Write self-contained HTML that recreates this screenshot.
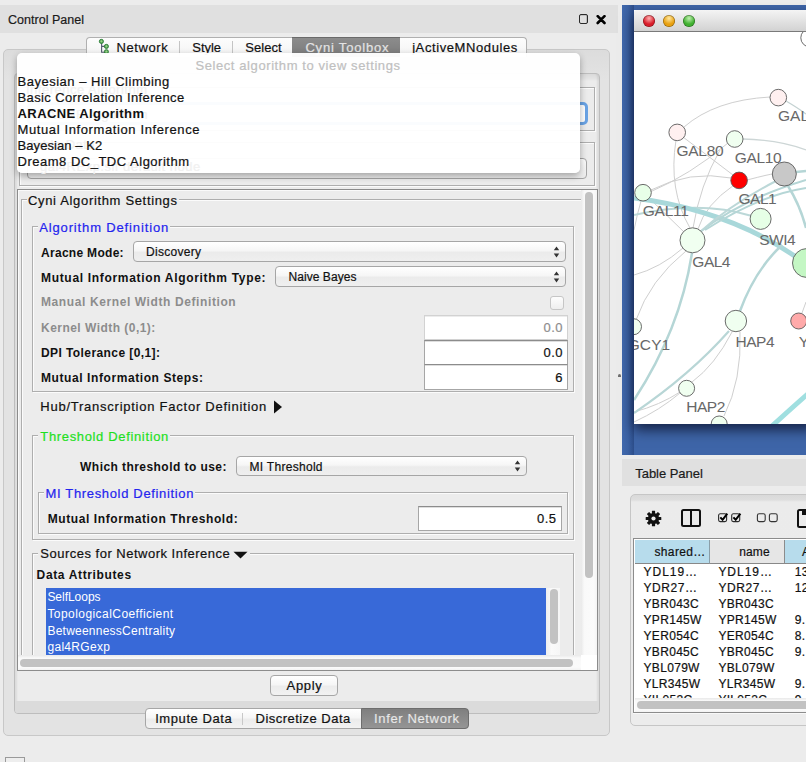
<!DOCTYPE html><html><head><meta charset="utf-8"><style>
html,body{margin:0;padding:0;}
body{width:806px;height:762px;overflow:hidden;position:relative;background:#ececec;font-family:"Liberation Sans",sans-serif;}
.t{position:absolute;white-space:nowrap;line-height:1;-webkit-text-stroke:0.2px currentColor;}
</style></head><body>
<div style="position:absolute;left:0px;top:5px;width:618px;height:28px;box-sizing:border-box;background:#e0e0e0;"></div>
<div class="t" style="left:8.00px;top:13.92px;font-size:12.5px;color:#1b1b1b;letter-spacing:0.021px;">Control Panel</div>
<div style="position:absolute;left:579.2px;top:14.2px;width:9.3px;height:9.4px;box-sizing:border-box;border:1.3px solid #2a2a2a;border-radius:2px;box-shadow:inset -0.6px 0.6px 0 rgba(0,0,0,0.25);"></div>
<svg style="position:absolute;left:596px;top:15px" width="10" height="10" viewBox="0 0 10 10"><path d="M1.7 1.2L8.5 8M8.5 1.2L1.7 8" stroke="#000" stroke-width="2.6" stroke-linecap="round"/></svg>
<div style="position:absolute;left:3px;top:49px;width:607px;height:687px;box-sizing:border-box;background:linear-gradient(#dcdcdc,#e3e3e3 30px,#e3e3e3);border:1px solid #c8c8c8;border-radius:5px;"></div>
<div style="position:absolute;left:86px;top:37px;width:441px;height:20px;box-sizing:border-box;border:1px solid #b0b0b0;border-bottom:none;border-radius:4px 4px 0 0;background:linear-gradient(#fdfdfd,#f3f3f3);"></div>
<div style="position:absolute;left:292px;top:37px;width:108px;height:20px;box-sizing:border-box;background:linear-gradient(#8c8c8c,#7a7a7a);border-top:1px solid #6a6a6a;"></div>
<div style="position:absolute;left:179px;top:41px;width:1px;height:14px;box-sizing:border-box;background:#c4c4c4;"></div>
<div style="position:absolute;left:232px;top:41px;width:1px;height:14px;box-sizing:border-box;background:#c4c4c4;"></div>
<div class="t" style="left:116.50px;top:41.40px;font-size:13px;color:#111;letter-spacing:0.575px;">Network</div>
<div class="t" style="left:192.30px;top:41.40px;font-size:13px;color:#111;letter-spacing:-0.025px;">Style</div>
<div class="t" style="left:245.30px;top:41.40px;font-size:13px;color:#111;letter-spacing:0.030px;">Select</div>
<div class="t" style="left:305.40px;top:41.40px;font-size:13px;color:#e4e4e4;letter-spacing:0.818px;">Cyni Toolbox</div>
<div class="t" style="left:412.15px;top:41.40px;font-size:13px;color:#111;letter-spacing:0.596px;">jActiveMNodules</div>
<svg style="position:absolute;left:97px;top:37px" width="14" height="18" viewBox="0 0 14 18"><path d="M4.6 6V15.3H9M4.6 9.4H9" stroke="#555a70" stroke-width="1.1" fill="none"/><defs><radialGradient id="gg" cx="50%" cy="45%" r="55%"><stop offset="0" stop-color="#a6d890"/><stop offset="1" stop-color="#3d9a45"/></radialGradient></defs><circle cx="4.4" cy="4.4" r="2.05" fill="url(#gg)" stroke="#2b7d37" stroke-width="0.9"/><circle cx="9.4" cy="9.4" r="2.05" fill="url(#gg)" stroke="#2b7d37" stroke-width="0.9"/><circle cx="9.4" cy="14.7" r="2.05" fill="url(#gg)" stroke="#2b7d37" stroke-width="0.9"/></svg>
<div style="position:absolute;left:14px;top:73px;width:586px;height:641px;box-sizing:border-box;background:linear-gradient(#dadada,#e4e4e4 5px,#ececec 7px,#ececec);border:1px solid #bdbdbd;border-radius:4px;box-shadow:inset 3px 0 2px -1px rgba(0,0,0,0.07),inset -3px 0 2px -1px rgba(0,0,0,0.07);"></div>
<div style="position:absolute;left:15px;top:701px;width:584px;height:12px;box-sizing:border-box;background:#dbdbdb;border-radius:0 0 3px 3px;"></div>
<div style="position:absolute;left:20px;top:88px;width:576px;height:44px;box-sizing:border-box;border:1px solid #fbfbfb;"></div>
<div style="position:absolute;left:19px;top:87px;width:576px;height:44px;box-sizing:border-box;border:1px solid #aeaeae;"></div>
<div style="position:absolute;left:27px;top:102px;width:561px;height:23px;box-sizing:border-box;border:3px solid #6aa3e4;border-radius:5px;background:#fff;"></div>
<div style="position:absolute;left:20px;top:143px;width:576px;height:44px;box-sizing:border-box;border:1px solid #fbfbfb;"></div>
<div style="position:absolute;left:19px;top:142px;width:576px;height:44px;box-sizing:border-box;border:1px solid #aeaeae;"></div>
<div style="position:absolute;left:27px;top:158px;width:560px;height:21px;box-sizing:border-box;border:1px solid #a5a5a5;border-radius:4px;background:linear-gradient(#fdfdfd,#ececec);"></div>
<div style="position:absolute;left:17px;top:189px;width:581px;height:482px;box-sizing:border-box;border:1px solid #8c8c8c;background:#ececec;"></div>
<div style="position:absolute;left:18px;top:190px;width:579px;height:480px;box-sizing:border-box;border-top:1px solid #fafafa;border-left:1px solid #fafafa;"></div>
<div style="position:absolute;left:22px;top:200px;width:570px;height:462px;box-sizing:border-box;border:1px solid #fbfbfb;"></div>
<div style="position:absolute;left:21px;top:199px;width:570px;height:462px;box-sizing:border-box;border:1px solid #aeaeae;"></div>
<div style="position:absolute;left:27px;top:199px;width:152px;height:2px;box-sizing:border-box;background:#ececec;"></div>
<div class="t" style="left:28.00px;top:194.40px;font-size:13px;color:#111;letter-spacing:0.664px;">Cyni Algorithm Settings</div>
<div style="position:absolute;left:33px;top:227px;width:542px;height:166px;box-sizing:border-box;border:1px solid #fbfbfb;"></div>
<div style="position:absolute;left:32px;top:226px;width:542px;height:166px;box-sizing:border-box;border:1px solid #aeaeae;"></div>
<div style="position:absolute;left:37.5px;top:226px;width:132.5px;height:2px;box-sizing:border-box;background:#ececec;"></div>
<div class="t" style="left:39.20px;top:221.20px;font-size:13px;color:#2424ee;letter-spacing:0.858px;">Algorithm Definition</div>
<div class="t" style="left:41.00px;top:246.54px;font-size:12px;color:#111;font-weight:bold;-webkit-text-stroke:0;letter-spacing:0.295px;">Aracne Mode:</div>
<div style="position:absolute;left:133px;top:241px;width:433px;height:21px;box-sizing:border-box;border:1px solid #a6a6a6;border-radius:4px;background:linear-gradient(#ffffff,#f6f6f6 45%,#ebebeb 55%,#efefef);"></div>
<svg style="position:absolute;left:552px;top:244.5px" width="8" height="14" viewBox="0 0 8 14"><path d="M4.5 1.4L7.2 5.3H1.8Z M4.5 12.6L7.2 8.6H1.8Z" fill="#333"/></svg>
<div class="t" style="left:146.00px;top:246.34px;font-size:12px;color:#111;letter-spacing:0.287px;">Discovery</div>
<div class="t" style="left:41.00px;top:271.54px;font-size:12px;color:#111;font-weight:bold;-webkit-text-stroke:0;letter-spacing:0.682px;">Mutual Information Algorithm Type:</div>
<div style="position:absolute;left:275px;top:266px;width:291px;height:21px;box-sizing:border-box;border:1px solid #a6a6a6;border-radius:4px;background:linear-gradient(#ffffff,#f6f6f6 45%,#ebebeb 55%,#efefef);"></div>
<svg style="position:absolute;left:552px;top:269.5px" width="8" height="14" viewBox="0 0 8 14"><path d="M4.5 1.4L7.2 5.3H1.8Z M4.5 12.6L7.2 8.6H1.8Z" fill="#333"/></svg>
<div class="t" style="left:288.50px;top:271.34px;font-size:12px;color:#111;letter-spacing:0.055px;">Naive Bayes</div>
<div class="t" style="left:41.00px;top:296.34px;font-size:12px;color:#8c8c8c;font-weight:bold;-webkit-text-stroke:0;letter-spacing:0.602px;">Manual Kernel Width Definition</div>
<div style="position:absolute;left:550px;top:296px;width:14px;height:14px;box-sizing:border-box;border:1px solid #c6c6c6;border-radius:3px;background:linear-gradient(#fdfdfd,#eeeeee);"></div>
<div class="t" style="left:41.00px;top:321.54px;font-size:12px;color:#8c8c8c;font-weight:bold;-webkit-text-stroke:0;letter-spacing:0.467px;">Kernel Width (0,1):</div>
<div style="position:absolute;left:424px;top:315px;width:144px;height:25px;box-sizing:border-box;border:1px solid #d2d2d2;box-shadow:inset 0 1px 0 #ececec;background:#fff;"></div>
<div class="t" style="left:543.45px;top:321.10px;font-size:13px;color:#8e8e8e;letter-spacing:0.500px;">0.0</div>
<div class="t" style="left:41.00px;top:346.84px;font-size:12px;color:#111;font-weight:bold;-webkit-text-stroke:0;letter-spacing:0.413px;">DPI Tolerance [0,1]:</div>
<div style="position:absolute;left:424px;top:340px;width:144px;height:25px;box-sizing:border-box;border:1px solid #a6a6a6;border-top-color:#8c8c8c;box-shadow:inset 0 1px 0 #dedede;background:#fff;"></div>
<div class="t" style="left:543.45px;top:345.90px;font-size:13px;color:#111;letter-spacing:0.500px;">0.0</div>
<div class="t" style="left:41.00px;top:371.84px;font-size:12px;color:#111;font-weight:bold;-webkit-text-stroke:0;letter-spacing:0.583px;">Mutual Information Steps:</div>
<div style="position:absolute;left:424px;top:364px;width:144px;height:26px;box-sizing:border-box;border:1px solid #a6a6a6;border-top-color:#8c8c8c;box-shadow:inset 0 1px 0 #dedede;background:#fff;"></div>
<div class="t" style="left:555.25px;top:370.70px;font-size:13px;color:#111;">6</div>
<div class="t" style="left:40.30px;top:400.10px;font-size:13px;color:#111;letter-spacing:0.754px;">Hub/Transcription Factor Definition</div>
<svg style="position:absolute;left:273px;top:400px" width="10" height="14" viewBox="0 0 10 14"><path d="M1 0.5L9 7L1 13.5Z" fill="#111"/></svg>
<div style="position:absolute;left:33px;top:436px;width:542px;height:105px;box-sizing:border-box;border:1px solid #fbfbfb;"></div>
<div style="position:absolute;left:32px;top:435px;width:542px;height:105px;box-sizing:border-box;border:1px solid #aeaeae;"></div>
<div style="position:absolute;left:37.5px;top:435px;width:132.5px;height:2px;box-sizing:border-box;background:#ececec;"></div>
<div class="t" style="left:40.30px;top:430.10px;font-size:13px;color:#1ee01e;letter-spacing:0.653px;">Threshold Definition</div>
<div class="t" style="left:80.10px;top:460.74px;font-size:12px;color:#111;font-weight:bold;-webkit-text-stroke:0;letter-spacing:0.439px;">Which threshold to use:</div>
<div style="position:absolute;left:236px;top:456px;width:291px;height:20px;box-sizing:border-box;border:1px solid #a6a6a6;border-radius:4px;background:linear-gradient(#ffffff,#f6f6f6 45%,#ebebeb 55%,#efefef);"></div>
<svg style="position:absolute;left:513px;top:459.0px" width="8" height="14" viewBox="0 0 8 14"><path d="M4.5 1.4L7.2 5.3H1.8Z M4.5 12.6L7.2 8.6H1.8Z" fill="#333"/></svg>
<div class="t" style="left:249.50px;top:460.54px;font-size:12px;color:#111;letter-spacing:0.291px;">MI Threshold</div>
<div style="position:absolute;left:39px;top:493px;width:530px;height:42px;box-sizing:border-box;border:1px solid #fbfbfb;"></div>
<div style="position:absolute;left:38px;top:492px;width:530px;height:42px;box-sizing:border-box;border:1px solid #aeaeae;"></div>
<div style="position:absolute;left:43.5px;top:492px;width:151.5px;height:2px;box-sizing:border-box;background:#ececec;"></div>
<div class="t" style="left:45.50px;top:486.70px;font-size:13px;color:#2424ee;letter-spacing:0.661px;">MI Threshold Definition</div>
<div class="t" style="left:47.70px;top:512.84px;font-size:12px;color:#111;font-weight:bold;-webkit-text-stroke:0;letter-spacing:0.595px;">Mutual Information Threshold:</div>
<div style="position:absolute;left:418px;top:506px;width:144px;height:25px;box-sizing:border-box;border:1px solid #a6a6a6;border-top-color:#8c8c8c;box-shadow:inset 0 1px 0 #dedede;background:#fff;"></div>
<div class="t" style="left:536.95px;top:511.70px;font-size:13px;color:#111;letter-spacing:0.500px;">0.5</div>
<div style="position:absolute;left:33px;top:554px;width:542px;height:106px;box-sizing:border-box;border:1px solid #fbfbfb;"></div>
<div style="position:absolute;left:32px;top:553px;width:542px;height:106px;box-sizing:border-box;border:1px solid #aeaeae;"></div>
<div style="position:absolute;left:37.5px;top:553px;width:212.5px;height:2px;box-sizing:border-box;background:#ececec;"></div>
<div class="t" style="left:40.30px;top:547.00px;font-size:13px;color:#111;letter-spacing:0.495px;">Sources for Network Inference</div>
<svg style="position:absolute;left:233px;top:551px" width="15" height="8" viewBox="0 0 15 8"><path d="M0.5 0.8H14.5L7.5 7.6Z" fill="#111"/></svg>
<div class="t" style="left:36.60px;top:569.34px;font-size:12px;color:#111;font-weight:bold;-webkit-text-stroke:0;letter-spacing:0.639px;">Data Attributes</div>
<div style="position:absolute;left:46px;top:588px;width:500px;height:67px;box-sizing:border-box;background:#3869d8;"></div>
<div style="position:absolute;left:546px;top:588px;width:14px;height:67px;box-sizing:border-box;background:linear-gradient(90deg,#eeeeee,#fafafa 40%,#f6f6f6);"></div>
<div style="position:absolute;left:550px;top:589px;width:8px;height:55px;box-sizing:border-box;background:#c2c2c2;border-radius:4px;"></div>
<div class="t" style="left:47.40px;top:591.04px;font-size:12px;color:#fff;letter-spacing:-0.025px;-webkit-text-stroke:0;">SelfLoops</div>
<div class="t" style="left:47.40px;top:607.84px;font-size:12px;color:#fff;letter-spacing:0.440px;-webkit-text-stroke:0;">TopologicalCoefficient</div>
<div class="t" style="left:47.40px;top:624.64px;font-size:12px;color:#fff;letter-spacing:0.242px;-webkit-text-stroke:0;">BetweennessCentrality</div>
<div class="t" style="left:47.40px;top:641.44px;font-size:12px;color:#fff;letter-spacing:0.319px;-webkit-text-stroke:0;">gal4RGexp</div>
<div style="position:absolute;left:581px;top:190px;width:16px;height:465px;box-sizing:border-box;background:linear-gradient(90deg,#e9e9e9,#f9f9f9 20%,#fbfbfb 80%,#f3f3f3);"></div>
<div style="position:absolute;left:585px;top:192px;width:8px;height:386px;box-sizing:border-box;background:#c2c2c2;border-radius:4px;"></div>
<div style="position:absolute;left:18px;top:655px;width:563px;height:15px;box-sizing:border-box;background:linear-gradient(#e9e9e9,#f9f9f9 20%,#fbfbfb 80%,#f3f3f3);"></div>
<div style="position:absolute;left:20px;top:659px;width:553px;height:8px;box-sizing:border-box;background:#c2c2c2;border-radius:4px;"></div>
<div style="position:absolute;left:581px;top:655px;width:16px;height:15px;box-sizing:border-box;background:#fff;"></div>
<div style="position:absolute;left:270px;top:675px;width:68px;height:21px;box-sizing:border-box;border:1px solid #a6a6a6;border-radius:4px;background:linear-gradient(#ffffff,#f6f6f6 45%,#ececec 55%,#f2f2f2);"></div>
<div class="t" style="left:286.60px;top:678.70px;font-size:13px;color:#111;letter-spacing:0.650px;">Apply</div>
<div style="position:absolute;left:145px;top:708px;width:324px;height:21px;box-sizing:border-box;border:1px solid #a6a6a6;border-radius:4px;background:linear-gradient(#ffffff,#f6f6f6 45%,#ececec 55%,#f2f2f2);"></div>
<div style="position:absolute;left:361px;top:708px;width:108px;height:21px;box-sizing:border-box;background:linear-gradient(#7f7f7f,#959595);border-radius:0 4px 4px 0;border:1px solid #6e6e6e;"></div>
<div style="position:absolute;left:242px;top:713px;width:1px;height:12px;box-sizing:border-box;background:#c8c8c8;"></div>
<div class="t" style="left:155.20px;top:712.20px;font-size:13px;color:#111;letter-spacing:0.575px;">Impute Data</div>
<div class="t" style="left:255.60px;top:712.20px;font-size:13px;color:#111;letter-spacing:0.461px;">Discretize Data</div>
<div class="t" style="left:374.10px;top:712.10px;font-size:13px;color:#ececec;letter-spacing:0.629px;text-shadow:0 -0.5px 0 rgba(0,0,0,0.35);">Infer Network</div>
<div style="position:absolute;left:17px;top:53px;width:563px;height:120px;background:rgba(255,255,255,0.965);border-radius:5px;box-shadow:0 3px 7px rgba(0,0,0,0.32);"></div>
<div class="t" style="left:26.00px;top:83.00px;font-size:13px;color:#f1f1f1;letter-spacing:0.500px;">Inference Algorithm</div>
<div class="t" style="left:28.00px;top:107.50px;font-size:13px;color:#f1f1f1;letter-spacing:0.500px;">ARACNE Algorithm</div>
<div class="t" style="left:28.00px;top:137.50px;font-size:13px;color:#f1f1f1;letter-spacing:0.500px;">Table Data</div>
<div class="t" style="left:40.00px;top:159.50px;font-size:13px;color:#f1f1f1;letter-spacing:0.500px;">gal4RExp.sif default node</div>
<div class="t" style="left:195.40px;top:59.00px;font-size:13px;color:#c0c0c0;letter-spacing:0.591px;">Select algorithm to view settings</div>
<div class="t" style="left:17.50px;top:74.70px;font-size:13px;color:#111;letter-spacing:0.507px;">Bayesian – Hill Climbing</div>
<div class="t" style="left:17.50px;top:90.70px;font-size:13px;color:#111;letter-spacing:0.381px;">Basic Correlation Inference</div>
<div class="t" style="left:17.50px;top:106.70px;font-size:13px;color:#111;font-weight:bold;-webkit-text-stroke:0;letter-spacing:0.427px;">ARACNE Algorithm</div>
<div class="t" style="left:17.50px;top:122.70px;font-size:13px;color:#111;letter-spacing:0.613px;">Mutual Information Inference</div>
<div class="t" style="left:17.50px;top:138.70px;font-size:13px;color:#111;letter-spacing:0.079px;">Bayesian – K2</div>
<div class="t" style="left:17.50px;top:154.70px;font-size:13px;color:#111;letter-spacing:0.507px;">Dream8 DC_TDC Algorithm</div>
<div style="position:absolute;left:618px;top:374px;width:3px;height:2.6px;box-sizing:border-box;background:#5a5a5a;border-radius:1.5px 1.5px 0 0;opacity:0.85;"></div>
<div style="position:absolute;left:5px;top:757px;width:20px;height:10px;box-sizing:border-box;border:1px solid #9a9a9a;background:#eee;"></div>
<div style="position:absolute;left:622px;top:5px;width:200px;height:450px;box-sizing:border-box;background:linear-gradient(90deg,#4068ad,#3b61a3 6px,#2c4d8a 12px,#3e65a8 12px,#3e65a8);"></div>
<div style="position:absolute;left:634px;top:10px;width:180px;height:414px;box-sizing:border-box;background:#fff;box-shadow:0 6px 12px rgba(0,0,20,0.65);"></div>
<svg style="position:absolute;left:634px;top:31px" width="172" height="393" viewBox="634 31 172 393"><path d="M684 127 Q715 100 770 97" stroke="#cfcfcf" stroke-width="1" fill="none"/><path d="M786 101 Q798 108 806 114" stroke="#c4d2d2" stroke-width="1.3" fill="none"/><path d="M676 140 Q668 190 690 228" stroke="#cfcfcf" stroke-width="1" fill="none"/><path d="M683 137 L733 175" stroke="#cfcfcf" stroke-width="1" fill="none"/><path d="M728 143 Q690 175 650 192" stroke="#cfcfcf" stroke-width="1" fill="none"/><path d="M651 190 Q690 170 731 178" stroke="#cfcfcf" stroke-width="1" fill="none"/><path d="M720 150 Q700 185 693 228" stroke="#cfcfcf" stroke-width="1" fill="none"/><path d="M734 185 Q705 205 698 229" stroke="#cfcfcf" stroke-width="1" fill="none"/><path d="M649 198 L684 232" stroke="#cfcfcf" stroke-width="1" fill="none"/><path d="M641 201 Q637 215 634 230" stroke="#cfcfcf" stroke-width="1" fill="none"/><path d="M747 180 Q770 174 773 174" stroke="#cfcfcf" stroke-width="1" fill="none"/><path d="M683 248 Q660 268 634 275" stroke="#cfcfcf" stroke-width="1" fill="none"/><path d="M686 251 Q650 280 636 320" stroke="#cfcfcf" stroke-width="1" fill="none"/><path d="M732 332 Q715 365 692 382" stroke="#cfcfcf" stroke-width="1" fill="none"/><path d="M680 392 Q660 405 634 412" stroke="#cfcfcf" stroke-width="1" fill="none"/><path d="M740 332 Q742 380 724 416" stroke="#cfcfcf" stroke-width="1" fill="none"/><path d="M802 313 L806 302" stroke="#cfcfcf" stroke-width="1" fill="none"/><path d="M743 139 Q780 140 806 150" stroke="#cdd6d6" stroke-width="1.3" fill="none"/><path d="M634 215 Q700 200 752 216" stroke="#bcd8d8" stroke-width="2" fill="none"/><path d="M634 198 Q735 211 806 264" stroke="#a8d8da" stroke-width="5" fill="none"/><path d="M700 232 Q740 200 806 180" stroke="#b5d6d6" stroke-width="2" fill="none"/><path d="M705 230 Q760 195 806 188" stroke="#b5d6d6" stroke-width="2" fill="none"/><path d="M776 181 Q730 205 700 232" stroke="#bcd8d8" stroke-width="2" fill="none"/><path d="M788 186 Q800 205 806 228" stroke="#b5d6d6" stroke-width="2.5" fill="none"/><path d="M796 172 L806 171" stroke="#b5d6d6" stroke-width="2.5" fill="none"/><path d="M692 253 Q680 330 634 400" stroke="#b5d6d6" stroke-width="2.5" fill="none"/><path d="M782 245 Q755 270 740 311" stroke="#b5d6d6" stroke-width="2.5" fill="none"/><path d="M729 331 Q690 375 634 413" stroke="#b8d6d6" stroke-width="2.2" fill="none"/><path d="M680 393 Q660 410 634 422" stroke="#cfcfcf" stroke-width="1" fill="none"/><path d="M772 426 Q795 405 810 392" stroke="#a0dfe0" stroke-width="5" fill="none"/><circle cx="810" cy="37.8" r="9.2" fill="#ffffff" stroke="#5a5a5a" stroke-width="0.9"/><circle cx="778.3" cy="97.6" r="8.3" fill="#fff0f0" stroke="#5a5a5a" stroke-width="0.9"/><circle cx="677.2" cy="132.4" r="8.3" fill="#fff0f0" stroke="#5a5a5a" stroke-width="0.9"/><circle cx="734.7" cy="139" r="8.3" fill="#f0fff0" stroke="#5a5a5a" stroke-width="0.9"/><circle cx="739.1" cy="180.4" r="8.3" fill="#ff0000" stroke="#5a5a5a" stroke-width="0.9"/><circle cx="784.3" cy="174" r="12" fill="#c8c8c8" stroke="#5a5a5a" stroke-width="0.9"/><circle cx="643" cy="192.7" r="8.3" fill="#e8ffe8" stroke="#5a5a5a" stroke-width="0.9"/><circle cx="760.6" cy="218.9" r="10.5" fill="#e6ffe6" stroke="#5a5a5a" stroke-width="0.9"/><circle cx="692.5" cy="240.3" r="12.5" fill="#f0fff0" stroke="#5a5a5a" stroke-width="0.9"/><circle cx="807" cy="263" r="14.5" fill="#c4f7c4" stroke="#5a5a5a" stroke-width="0.9"/><circle cx="633.5" cy="326.7" r="8" fill="#f0fff0" stroke="#5a5a5a" stroke-width="0.9"/><circle cx="735.9" cy="321" r="10.7" fill="#f0fff0" stroke="#5a5a5a" stroke-width="0.9"/><circle cx="798.7" cy="321" r="8" fill="#ffaaaa" stroke="#5a5a5a" stroke-width="0.9"/><circle cx="686.6" cy="388.3" r="8" fill="#f0fff0" stroke="#5a5a5a" stroke-width="0.9"/><circle cx="719.2" cy="424" r="8" fill="#f0fff0" stroke="#5a5a5a" stroke-width="0.9"/><text x="777.90" y="120.70" font-size="15.5" fill="#686868" letter-spacing="0.10" font-family="Liberation Sans">GAL</text><text x="676.40" y="155.60" font-size="15.5" fill="#686868" letter-spacing="-0.24" font-family="Liberation Sans">GAL80</text><text x="734.80" y="162.70" font-size="15.5" fill="#686868" letter-spacing="-0.36" font-family="Liberation Sans">GAL10</text><text x="738.52" y="204.00" font-size="15.5" fill="#686868" letter-spacing="-0.50" font-family="Liberation Sans">GAL1</text><text x="642.70" y="215.80" font-size="15.5" fill="#686868" letter-spacing="-0.20" font-family="Liberation Sans">GAL11</text><text x="759.20" y="244.70" font-size="15.5" fill="#686868" letter-spacing="-0.50" font-family="Liberation Sans">SWI4</text><text x="692.33" y="267.40" font-size="15.5" fill="#686868" letter-spacing="-0.50" font-family="Liberation Sans">GAL4</text><text x="627.70" y="349.60" font-size="15.5" fill="#686868" letter-spacing="0.10" font-family="Liberation Sans">GCY1</text><text x="735.55" y="346.70" font-size="15.5" fill="#686868" letter-spacing="-0.50" font-family="Liberation Sans">HAP4</text><text x="798.70" y="346.70" font-size="15.5" fill="#686868" letter-spacing="0.10" font-family="Liberation Sans">Y</text><text x="686.30" y="412.00" font-size="15.5" fill="#686868" letter-spacing="-0.50" font-family="Liberation Sans">HAP2</text></svg>
<div style="position:absolute;left:634px;top:10px;width:180px;height:22px;box-sizing:border-box;background:linear-gradient(#f4f4f4,#d2d2d2);border-bottom:1px solid #7a7a7a;border-radius:3px 0 0 0;"></div>
<div style="position:absolute;left:643px;top:15px;width:12px;height:12px;border-radius:6px;background:radial-gradient(circle at 50% 28%,#ffb0b0 0,#d81d2a 55%,#d81d2a 100%);box-shadow:inset 0 0 0 0.7px rgba(0,0,0,0.35);"></div>
<div style="position:absolute;left:663px;top:15px;width:12px;height:12px;border-radius:6px;background:radial-gradient(circle at 50% 28%,#ffe8a0 0,#e8a010 55%,#e8a010 100%);box-shadow:inset 0 0 0 0.7px rgba(0,0,0,0.35);"></div>
<div style="position:absolute;left:683px;top:15px;width:12px;height:12px;border-radius:6px;background:radial-gradient(circle at 50% 28%,#c0f0b0 0,#40b030 55%,#40b030 100%);box-shadow:inset 0 0 0 0.7px rgba(0,0,0,0.35);"></div>
<div style="position:absolute;left:622px;top:459px;width:200px;height:27px;box-sizing:border-box;background:#e0e0e0;"></div>
<div class="t" style="left:635.30px;top:466.50px;font-size:13px;color:#1b1b1b;letter-spacing:-0.045px;">Table Panel</div>
<div style="position:absolute;left:630px;top:494px;width:200px;height:232px;box-sizing:border-box;background:linear-gradient(#d9d9d9,#dedede 5px,#ebebeb 7px,#ececec);border:1px solid #c6c6c6;border-radius:5px;"></div>
<div style="position:absolute;left:633px;top:538px;width:200px;height:175px;box-sizing:border-box;background:#fff;border:1px solid #8c8c8c;"></div>
<div style="position:absolute;left:633px;top:713px;width:200px;height:1px;box-sizing:border-box;background:#f8f8f8;"></div>
<div style="position:absolute;left:635px;top:540px;width:75px;height:24px;box-sizing:border-box;background:#b7dcec;border-right:1px solid #8a9ea8;border-bottom:1px solid #888;"></div>
<div style="position:absolute;left:710px;top:540px;width:75px;height:24px;box-sizing:border-box;background:#e6e6e6;border-right:1px solid #8c8c8c;border-bottom:1px solid #888;"></div>
<div style="position:absolute;left:785px;top:540px;width:30px;height:24px;box-sizing:border-box;background:#b7dcec;border-bottom:1px solid #888;"></div>
<div class="t" style="left:802.00px;top:546.04px;font-size:12px;color:#111;">A</div>
<div class="t" style="left:654.50px;top:546.04px;font-size:12px;color:#111;letter-spacing:0.350px;">shared…</div>
<div class="t" style="left:739.20px;top:546.04px;font-size:12px;color:#111;letter-spacing:0.167px;">name</div>
<div style="position:absolute;left:635px;top:564px;width:180px;height:134px;overflow:hidden;">
<div class="t" style="left:8.50px;top:2.14px;font-size:12px;letter-spacing:0.980px;color:#111">YDL19…</div>
<div class="t" style="left:83.40px;top:2.14px;font-size:12px;letter-spacing:0.980px;color:#111">YDL19…</div>
<div class="t" style="left:159.80px;top:2.14px;font-size:12px;letter-spacing:0.320px;color:#111">13</div>
<div class="t" style="left:8.50px;top:18.14px;font-size:12px;letter-spacing:0.580px;color:#111">YDR27…</div>
<div class="t" style="left:83.40px;top:18.14px;font-size:12px;letter-spacing:0.580px;color:#111">YDR27…</div>
<div class="t" style="left:159.80px;top:18.14px;font-size:12px;letter-spacing:0.320px;color:#111">12</div>
<div class="t" style="left:8.50px;top:34.14px;font-size:12px;letter-spacing:0.320px;color:#111">YBR043C</div>
<div class="t" style="left:83.40px;top:34.14px;font-size:12px;letter-spacing:0.320px;color:#111">YBR043C</div>
<div class="t" style="left:8.50px;top:50.14px;font-size:12px;letter-spacing:0.320px;color:#111">YPR145W</div>
<div class="t" style="left:83.40px;top:50.14px;font-size:12px;letter-spacing:0.320px;color:#111">YPR145W</div>
<div class="t" style="left:159.80px;top:50.14px;font-size:12px;letter-spacing:0.320px;color:#111">9.</div>
<div class="t" style="left:8.50px;top:66.14px;font-size:12px;letter-spacing:0.320px;color:#111">YER054C</div>
<div class="t" style="left:83.40px;top:66.14px;font-size:12px;letter-spacing:0.320px;color:#111">YER054C</div>
<div class="t" style="left:159.80px;top:66.14px;font-size:12px;letter-spacing:0.320px;color:#111">8.</div>
<div class="t" style="left:8.50px;top:82.14px;font-size:12px;letter-spacing:0.320px;color:#111">YBR045C</div>
<div class="t" style="left:83.40px;top:82.14px;font-size:12px;letter-spacing:0.320px;color:#111">YBR045C</div>
<div class="t" style="left:159.80px;top:82.14px;font-size:12px;letter-spacing:0.320px;color:#111">9.</div>
<div class="t" style="left:8.50px;top:98.14px;font-size:12px;letter-spacing:0.320px;color:#111">YBL079W</div>
<div class="t" style="left:83.40px;top:98.14px;font-size:12px;letter-spacing:0.320px;color:#111">YBL079W</div>
<div class="t" style="left:8.50px;top:114.14px;font-size:12px;letter-spacing:0.320px;color:#111">YLR345W</div>
<div class="t" style="left:83.40px;top:114.14px;font-size:12px;letter-spacing:0.320px;color:#111">YLR345W</div>
<div class="t" style="left:159.80px;top:114.14px;font-size:12px;letter-spacing:0.320px;color:#111">9.</div>
<div class="t" style="left:8.50px;top:130.14px;font-size:12px;letter-spacing:0.320px;color:#111">YIL052C</div>
<div class="t" style="left:83.40px;top:130.14px;font-size:12px;letter-spacing:0.320px;color:#111">YIL052C</div>
<div class="t" style="left:159.80px;top:130.14px;font-size:12px;letter-spacing:0.320px;color:#111">9.</div>
</div>
<div style="position:absolute;left:635px;top:698px;width:180px;height:14px;box-sizing:border-box;background:linear-gradient(#e9e9e9,#f9f9f9 20%,#fbfbfb 80%,#f3f3f3);"></div>
<div style="position:absolute;left:637px;top:701px;width:180px;height:8px;box-sizing:border-box;background:#c2c2c2;border-radius:4px;"></div>
<svg style="position:absolute;left:643px;top:508px" width="21" height="21" viewBox="0 0 21 21"><g transform="translate(10.5 10.5)"><circle r="5.6" fill="#111"/><rect x="-1.6" y="-7.8" width="3.2" height="4" rx="0.4" fill="#111" transform="rotate(0)"/><rect x="-1.6" y="-7.8" width="3.2" height="4" rx="0.4" fill="#111" transform="rotate(45)"/><rect x="-1.6" y="-7.8" width="3.2" height="4" rx="0.4" fill="#111" transform="rotate(90)"/><rect x="-1.6" y="-7.8" width="3.2" height="4" rx="0.4" fill="#111" transform="rotate(135)"/><rect x="-1.6" y="-7.8" width="3.2" height="4" rx="0.4" fill="#111" transform="rotate(180)"/><rect x="-1.6" y="-7.8" width="3.2" height="4" rx="0.4" fill="#111" transform="rotate(225)"/><rect x="-1.6" y="-7.8" width="3.2" height="4" rx="0.4" fill="#111" transform="rotate(270)"/><rect x="-1.6" y="-7.8" width="3.2" height="4" rx="0.4" fill="#111" transform="rotate(315)"/><circle r="2.1" fill="#ececec"/></g></svg>
<div style="position:absolute;left:681px;top:509px;width:20px;height:18px;box-sizing:border-box;border:2px solid #111;border-top-width:2.6px;border-radius:2.5px;"></div>
<div style="position:absolute;left:690px;top:510px;width:1.6px;height:16px;box-sizing:border-box;background:#111;"></div>
<svg style="position:absolute;left:716px;top:510px" width="28" height="14" viewBox="0 0 28 14"><rect x="2.6" y="3.8" width="8" height="7.8" rx="1.6" fill="none" stroke="#2a2a2a" stroke-width="1.1"/><rect x="15.7" y="3.8" width="8" height="7.8" rx="1.6" fill="none" stroke="#2a2a2a" stroke-width="1.1"/><path d="M4.3 7.4L6.6 9.8L11.3 3.6M17.4 7.4L19.7 9.8L24.4 3.6" fill="none" stroke="#000" stroke-width="2"/></svg>
<svg style="position:absolute;left:755px;top:511px" width="26" height="13" viewBox="0 0 26 13"><rect x="2.4" y="2.8" width="7.8" height="7.8" rx="1.8" fill="none" stroke="#333" stroke-width="1.1"/><rect x="14.4" y="2.8" width="7.8" height="7.8" rx="1.8" fill="none" stroke="#333" stroke-width="1.1"/></svg>
<div style="position:absolute;left:797px;top:509px;width:20px;height:19px;box-sizing:border-box;border:2.2px solid #111;border-radius:2.5px;"></div>
<div style="position:absolute;left:802px;top:509px;width:4px;height:6px;box-sizing:border-box;background:#111;"></div>
</body></html>
